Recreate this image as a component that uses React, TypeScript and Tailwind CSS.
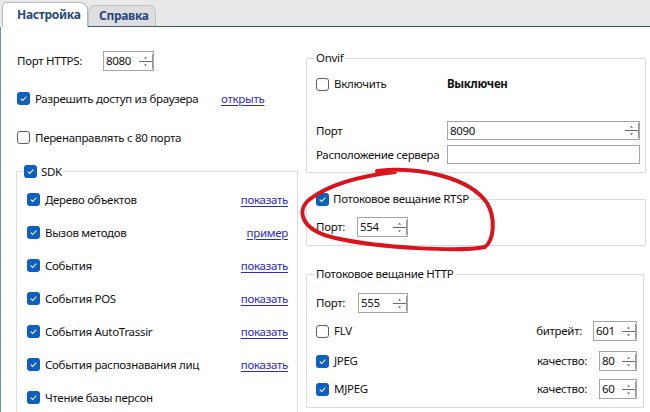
import React from "react";

function Box({ on }: { on?: boolean }) {
  if (on) {
    return (
      <span className="flex h-[13px] w-[13px] shrink-0 items-center justify-center rounded-[3px] bg-[#0d5fc2]">
        <svg width="9" height="9" viewBox="0 0 9 9">
          <path d="M1.8 4.7 L3.7 6.5 L7.3 2.6" fill="none" stroke="#ffffff" strokeWidth="1.1" />
        </svg>
      </span>
    );
  }
  return <span className="h-[13px] w-[13px] shrink-0 rounded-[3px] border border-[#5f5f5f] bg-white" />;
}

// tiny up/down arrows of a Windows numeric spin box
function Arrows() {
  return (
    <svg width="15" height="17" viewBox="0 0 15 17" className="shrink-0">
      <path d="M6 5.5 L7.5 4 L9 5.5 Z" fill="#444" />
      <line x1="1" y1="8.5" x2="14" y2="8.5" stroke="#6b6b6b" strokeWidth="1" />
      <path d="M6 11.5 L9 11.5 L7.5 13 Z" fill="#444" />
      <line x1="14.5" y1="1" x2="14.5" y2="16" stroke="#9a9a9a" strokeWidth="1" />
    </svg>
  );
}

function Spin({ value, w }: { value: string; w: string }) {
  return (
    <div className={`flex h-[20px] shrink-0 items-center border border-[#a6a6a6] bg-white ${w}`}>
      <span className="flex-1 pl-[2px] leading-none">{value}</span>
      <Arrows />
    </div>
  );
}

function Link({ children }: { children: React.ReactNode }) {
  return <span className="cursor-pointer text-[#2a2ad4] underline underline-offset-[2px]">{children}</span>;
}

const sdkItems: { label: string; link?: string }[] = [
  { label: "Дерево объектов", link: "показать" },
  { label: "Вызов методов", link: "пример" },
  { label: "События", link: "показать" },
  { label: "События POS", link: "показать" },
  { label: "События AutoTrassir", link: "показать" },
  { label: "События распознавания лиц", link: "показать" },
  { label: "Чтение базы персон" },
];

export default function App() {
  return (
    <div className="relative h-[412px] w-[650px] overflow-hidden whitespace-nowrap bg-white font-['Noto_Sans',sans-serif] text-[11.5px] tracking-[-0.3px] text-[#111]">
      {/* tab strip */}
      <div className="flex h-[27px] items-end bg-[#e8e8e8]">
        <div className="ml-[2px] flex h-[25px] w-[86px] shrink-0 items-center rounded-tl-[5px] rounded-tr-[8px] border border-b-0 border-[#b3b8c0] bg-white pl-[14px] text-[12px] font-bold text-[#27497d]">
          Настройка
        </div>
        <div className="flex h-full flex-1 items-end border-b border-[#3b5789]">
          <div className="flex h-[21px] w-[68px] items-center rounded-tl-[7px] rounded-tr-[7px] border border-b-0 border-[#c2c2c2] bg-[#dedede] pl-[10px] text-[12px] font-bold text-[#27497d]">
            Справка
          </div>
        </div>
      </div>

      {/* body */}
      <div className="flex h-[385px] border-l border-[#6a8cc2] pl-[15px]">
        {/* left column */}
        <div className="flex w-[282px] shrink-0 flex-col">
          <div className="mt-[24px] flex h-[20px] items-center">
            <span className="w-[87px] pl-[1px]">Порт HTTPS:</span>
            <Spin value="8080" w="w-[51px]" />
          </div>
          <div className="mt-[19px] flex h-[20px] items-center pl-[1px]">
            <Box on />
            <span className="ml-[5px] w-[186px]">Разрешить доступ из браузера</span>
            <Link>открыть</Link>
          </div>
          <div className="mt-[22px] flex h-[20px] items-center pl-[1px]">
            <Box />
            <span className="ml-[5px]">Перенаправлять с 80 порта</span>
          </div>

          <fieldset className="mt-[17px] border border-[#dcdcdc] px-[6px] pb-[20px]">
            <legend className="flex h-[16px] items-center gap-[4px] px-[1px]">
              <Box on />
              <span>SDK</span>
            </legend>
            <div className="flex flex-col gap-[13px] pl-[4px] pr-[3px] pt-[10px]">
              {sdkItems.map((it) => (
                <div key={it.label} className="flex h-[20px] items-center">
                  <Box on />
                  <span className="ml-[5px] flex-1">{it.label}</span>
                  {it.link && <Link>{it.link}</Link>}
                </div>
              ))}
            </div>
          </fieldset>
        </div>

        {/* right column */}
        <div className="ml-[8px] flex w-[340px] shrink-0 flex-col">
          <fieldset className="mt-[23px] border border-[#dcdcdc] pb-[8px] pl-[7px] pr-[5px]">
            <legend className="flex h-[16px] items-center px-[2px]">Onvif</legend>
            <div className="pl-[2px]">
              <div className="mt-[8px] flex h-[20px] items-center">
                <div className="flex w-[131px] items-center">
                  <Box />
                  <span className="ml-[5px]">Включить</span>
                </div>
                <span className="font-bold">Выключен</span>
              </div>
              <div className="mt-[27px] flex h-[19px] items-center">
                <span className="w-[131px]">Порт</span>
                <div className="flex h-[19px] flex-1 items-center border border-[#a6a6a6] bg-white">
                  <span className="flex-1 pl-[2px] leading-none">8090</span>
                  <Arrows />
                </div>
              </div>
              <div className="mt-[5px] flex h-[19px] items-center">
                <span className="w-[131px]">Расположение сервера</span>
                <div className="h-[19px] flex-1 border border-[#a6a6a6] bg-white" />
              </div>
            </div>
          </fieldset>

          <fieldset className="mt-[18px] border border-[#dcdcdc] pb-[8px] pl-[7px] pr-[5px]">
            <legend className="flex h-[16px] items-center gap-[4px] px-[2px]">
              <Box on />
              <span>Потоковое вещание RTSP</span>
            </legend>
            <div className="mt-[10px] flex h-[20px] items-center pl-[2px]">
              <span className="w-[41px]">Порт:</span>
              <Spin value="554" w="w-[51px]" />
            </div>
          </fieldset>

          <fieldset className="mt-[20px] w-[338px] border border-[#dcdcdc] pb-[8px] pl-[7px] pr-[6px]">
            <legend className="flex h-[16px] items-center px-[2px]">Потоковое вещание HTTP</legend>
            <div className="pl-[2px]">
              <div className="mt-[11px] flex h-[20px] items-center">
                <span className="w-[42px]">Порт:</span>
                <Spin value="555" w="w-[50px]" />
              </div>
              <div className="mt-[8px] flex h-[20px] items-center">
                <Box />
                <span className="ml-[5px] flex-1">FLV</span>
                <span className="mr-[11px]">битрейт:</span>
                <Spin value="601" w="w-[44px]" />
              </div>
              <div className="mt-[10px] flex h-[20px] items-center">
                <Box on />
                <span className="ml-[5px] flex-1">JPEG</span>
                <span className="mr-[12px]">качество:</span>
                <Spin value="80" w="w-[38px]" />
              </div>
              <div className="mt-[8px] flex h-[20px] items-center">
                <Box on />
                <span className="ml-[5px] flex-1">MJPEG</span>
                <span className="mr-[12px]">качество:</span>
                <Spin value="60" w="w-[38px]" />
              </div>
            </div>
          </fieldset>
        </div>
      </div>

      {/* hand-drawn red marker ellipse over the RTSP block */}
      <svg className="pointer-events-none absolute left-0 top-0" width="650" height="412" viewBox="0 0 650 412">
        <path
          d="M377 171 C420 166 470 178 487 203 C496 218 494 240 485 247 C460 252 380 248 335 238 C300 230 296 210 310 199 C330 184 360 176 395 172"
          fill="none"
          stroke="#d9141c"
          strokeWidth="4"
          strokeLinecap="round"
        />
      </svg>
    </div>
  );
}
